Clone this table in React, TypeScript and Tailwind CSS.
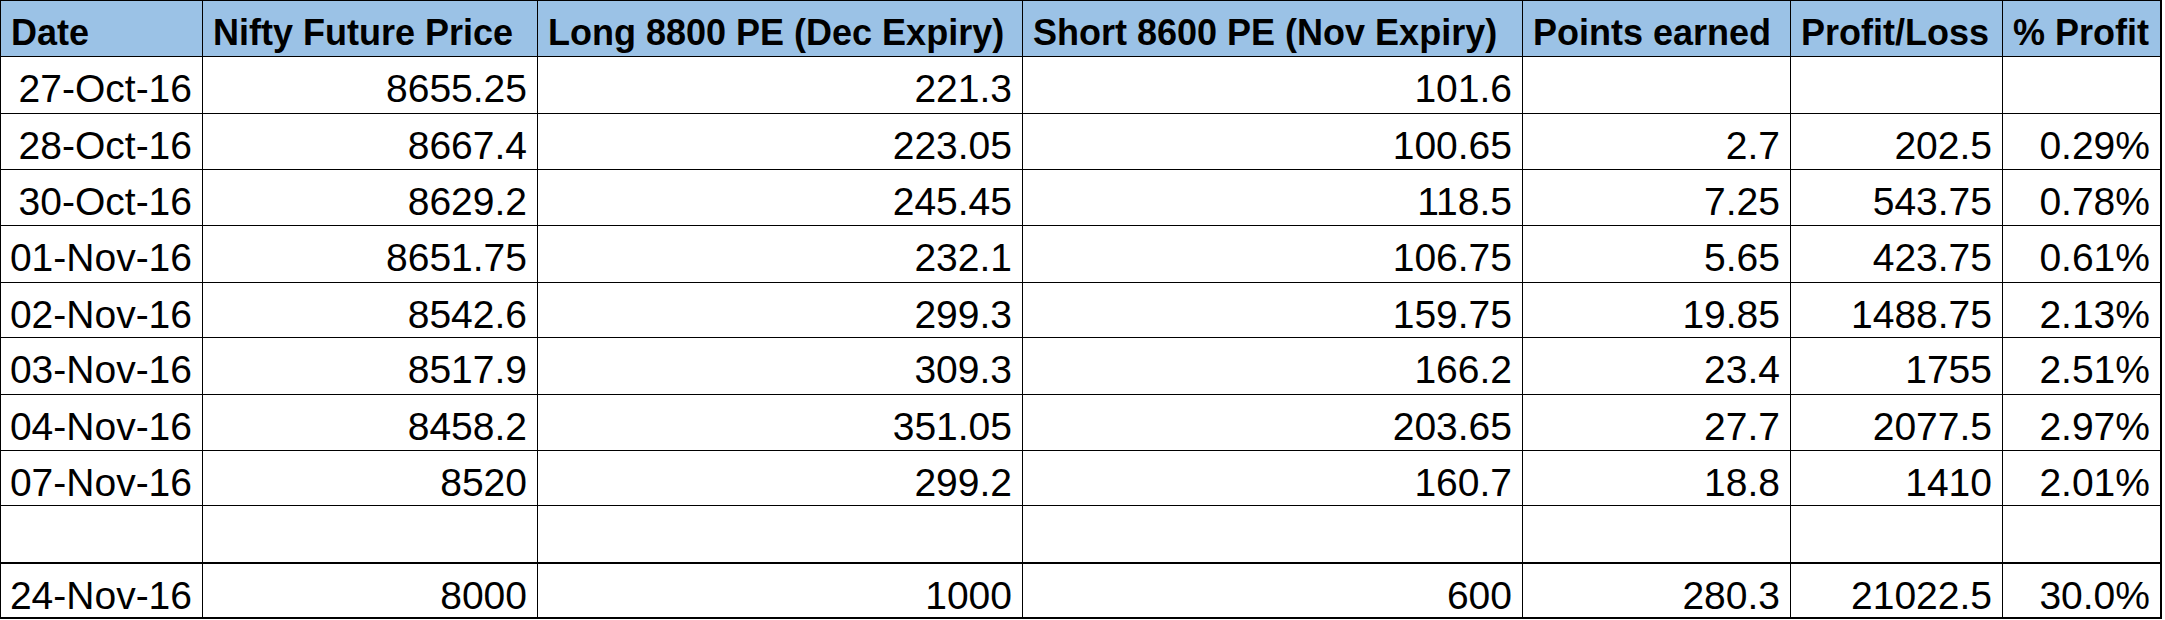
/**
 * Nifty put calendar spread table.
 */

const COLS = [
  { title: "Date", w: "w-[202px]" },
  { title: "Nifty Future Price", w: "w-[335px]" },
  { title: "Long 8800 PE (Dec Expiry)", w: "w-[485px]" },
  { title: "Short 8600 PE (Nov Expiry)", w: "w-[500px]" },
  { title: "Points earned", w: "w-[268px]" },
  { title: "Profit/Loss", w: "w-[212px]" },
  { title: "% Profit", w: "w-[159px]" },
];

const ROWS = [
  { h: "h-[57px]", cells: ["27-Oct-16", "8655.25", "221.3", "101.6", "", "", ""] },
  { h: "h-[56px]", cells: ["28-Oct-16", "8667.4", "223.05", "100.65", "2.7", "202.5", "0.29%"] },
  { h: "h-[56px]", cells: ["30-Oct-16", "8629.2", "245.45", "118.5", "7.25", "543.75", "0.78%"] },
  { h: "h-[57px]", cells: ["01-Nov-16", "8651.75", "232.1", "106.75", "5.65", "423.75", "0.61%"] },
  { h: "h-[55px]", cells: ["02-Nov-16", "8542.6", "299.3", "159.75", "19.85", "1488.75", "2.13%"] },
  { h: "h-[57px]", cells: ["03-Nov-16", "8517.9", "309.3", "166.2", "23.4", "1755", "2.51%"] },
  { h: "h-[56px]", cells: ["04-Nov-16", "8458.2", "351.05", "203.65", "27.7", "2077.5", "2.97%"] },
  { h: "h-[55px]", cells: ["07-Nov-16", "8520", "299.2", "160.7", "18.8", "1410", "2.01%"] },
  { h: "h-[58px]", cells: ["", "", "", "", "", "", ""], thick: true },
  { h: "h-[55px]", cells: ["24-Nov-16", "8000", "1000", "600", "280.3", "21022.5", "30.0%"], thick: true },
];

export default function App() {
  return (
    <main className="min-h-screen bg-white font-['Liberation_Sans',Arial,sans-serif] text-black">
      <div className="flex w-fit flex-col border-l border-t border-black">
        <div className="flex h-[56px] bg-[#9bc2e6]">
          {COLS.map((col, i) => (
            <div
              key={col.title}
              className={`${col.w} whitespace-nowrap border-b border-black pl-[10px] pt-[10px] text-[36px] font-bold leading-[44px] ${
                i === COLS.length - 1 ? "border-r-2" : "border-r"
              }`}
            >
              {col.title}
            </div>
          ))}
        </div>
        {ROWS.map((row, r) => (
          <div key={r} className={`flex ${row.h}`}>
            {row.cells.map((cell, i) => (
              <div
                key={i}
                className={`${COLS[i].w} whitespace-nowrap border-black pr-[10px] pt-[10px] text-right text-[39px] leading-[44px] ${
                  row.thick ? "border-b-2" : "border-b"
                } ${i === COLS.length - 1 ? "border-r-2" : "border-r"}`}
              >
                {cell}
              </div>
            ))}
          </div>
        ))}
      </div>
    </main>
  );
}
